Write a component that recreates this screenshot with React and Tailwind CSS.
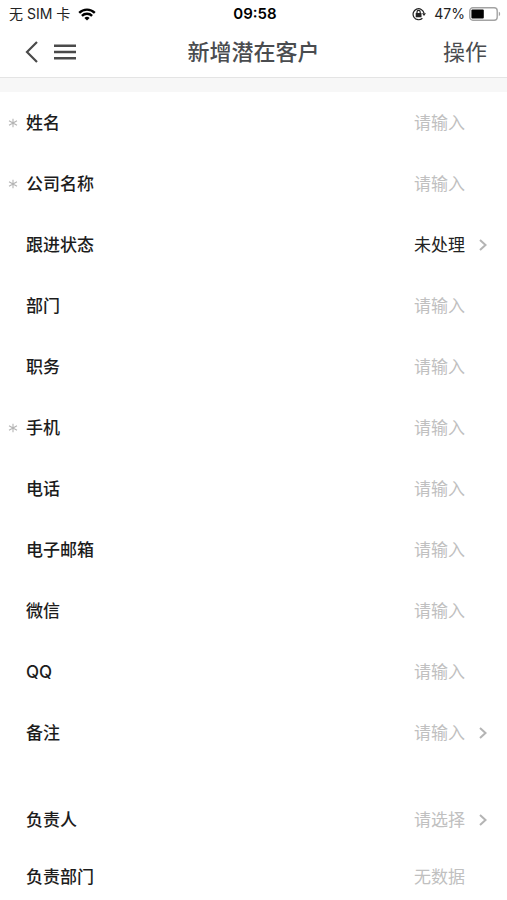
import { useState } from 'react';

const camposCliente = [
  { id: 'name', label: '姓名', required: true },
  { id: 'company', label: '公司名称', required: true },
  { id: 'status', label: '跟进状态', options: ['未处理', '跟进中', '已转化'] },
  { id: 'department', label: '部门' },
  { id: 'position', label: '职务' },
  { id: 'mobile', label: '手机', required: true },
  { id: 'phone', label: '电话' },
  { id: 'email', label: '电子邮箱' },
  { id: 'wechat', label: '微信' },
  { id: 'qq', label: 'QQ' },
  { id: 'remark', label: '备注', arrow: true }
];

function Wifi() {
  return (
    <svg viewBox="0 0 18 13" className="w-[18px] h-[13px]" fill="none" stroke="#000" strokeWidth="2.4">
      <path d="M1.2 4.8a11.2 11.2 0 0 1 15.6 0" />
      <path d="M3.9 7.8a7.2 7.2 0 0 1 10.2 0" />
      <path d="M9 12.6 6.4 10a3.8 3.8 0 0 1 5.2 0Z" fill="#000" stroke="none" />
    </svg>
  );
}

function RotationLock() {
  return (
    <svg viewBox="0 0 14 14" className="w-[14px] h-[14px]" fill="none" stroke="#222" strokeWidth="1.2">
      <path d="M10.4 11.2A5.5 5.5 0 1 1 12 6.2" />
      <path d="M10 6.2h4l-2 2.8Z" fill="#222" stroke="none" />
      <rect x="3.7" y="6" width="5.8" height="4.2" rx="0.5" fill="#222" stroke="none" />
      <path d="M5 6.2V5a1.6 1.6 0 0 1 3.2 0v1.2" />
    </svg>
  );
}

function Battery() {
  return (
    <svg viewBox="0 0 32 14" className="w-8 h-[14px]" fill="none">
      <rect x="0.8" y="0.8" width="27.4" height="12.4" rx="3" stroke="#a3a3a3" strokeWidth="1.4" />
      <rect x="2.4" y="2.4" width="12.4" height="9.2" rx="1" fill="#000" />
      <path d="M29.8 4.8c1.8.6 1.8 3.8 0 4.4Z" fill="#a3a3a3" />
    </svg>
  );
}

function Arrow() {
  return (
    <svg viewBox="0 0 8 12" className="w-2 h-3" fill="none" stroke="#b4b4b4" strokeWidth="2">
      <path d="M1 1l5.5 5L1 11" />
    </svg>
  );
}

function Row({ id, label, required, arrow, height = 'h-[61px]', children }) {
  return (
    <div className={`flex items-center ${height}`}>
      <span className="w-[26px] shrink-0 pl-2 flex items-center">
        {required && (
          <svg viewBox="0 0 10 10" className="w-[10px] h-[10px]" stroke="#b4b4b4" strokeWidth="1.1">
            <path d="M5 0.8v8.4M1 2.8l8 4.4M9 2.8L1 7.2" />
          </svg>
        )}
      </span>
      <label htmlFor={id} className="shrink-0 font-medium text-[#1c1c1c]">{label}</label>
      <div className="flex-1 min-w-0 flex justify-end">{children}</div>
      <span className="w-[42px] shrink-0 pl-[14px]">{arrow && <Arrow />}</span>
    </div>
  );
}

export default function App() {
  const [values, setValues] = useState({ status: '未处理', owner: '' });

  const cambiar = (e) => setValues({ ...values, [e.target.id]: e.target.value });

  return (
    <div className="min-h-screen bg-white text-[17px] leading-6 font-['Inter','Noto_Sans_CJK_SC',sans-serif]">
      <div className="h-7 pl-[9px] pr-[6px] grid grid-cols-[1fr_auto_1fr] items-center text-sm text-[#222]">
        <div className="flex items-center gap-2">
          <span>无 SIM 卡</span>
          <Wifi />
        </div>
        <span className="font-semibold text-[15px] text-black">09:58</span>
        <div className="flex items-center justify-end">
          <RotationLock />
          <span className="ml-2 mr-1">47%</span>
          <Battery />
        </div>
      </div>

      <header className="h-[50px] px-5 pb-px grid grid-cols-[1fr_auto_1fr] items-center border-b border-[#e4e4e4] text-[22px] text-[#4a4c4f]">
        <div className="flex items-center gap-4 pl-[5px]">
          <button aria-label="返回">
            <svg viewBox="0 0 13 22" className="w-[13px] h-[22px]" fill="none" stroke="#4a4a4a" strokeWidth="2.2">
              <path d="M12 1L2 11l10 10" />
            </svg>
          </button>
          <button aria-label="菜单">
            <svg viewBox="0 0 22 16" className="w-[22px] h-4" stroke="#4a4a4a" strokeWidth="2.4">
              <path d="M0 1.8h22M0 8h22M0 14.2h22" />
            </svg>
          </button>
        </div>
        <h1 className="font-medium">新增潜在客户</h1>
        <button className="justify-self-end">操作</button>
      </header>

      <div className="h-[14px] bg-[#f7f7f7]" />

      <form>
        {camposCliente.map((campo) => (
          <Row key={campo.id} {...campo} arrow={campo.arrow || !!campo.options}>
            {campo.options ? (
              <select id={campo.id} value={values[campo.id]} onChange={cambiar} className="appearance-none bg-transparent text-right text-[#222] outline-none">
                {campo.options.map((o) => <option key={o}>{o}</option>)}
              </select>
            ) : (
              <input
                id={campo.id}
                value={values[campo.id] || ''}
                onChange={cambiar}
                placeholder="请输入"
                className="w-full bg-transparent text-right text-[#222] placeholder:text-[#c0c0c0] outline-none"
              />
            )}
          </Row>
        ))}

        <div className="mt-7">
          <Row id="owner" label="负责人" arrow height="h-[57px]">
            <select id="owner" value={values.owner} onChange={cambiar} className="appearance-none bg-transparent text-right text-[#c0c0c0] outline-none">
              <option value="">请选择</option>
            </select>
          </Row>
          <Row id="ownerDepartment" label="负责部门" height="h-[57px]">
            <output id="ownerDepartment" className="text-[#c0c0c0]">无数据</output>
          </Row>
        </div>
      </form>
    </div>
  );
}
